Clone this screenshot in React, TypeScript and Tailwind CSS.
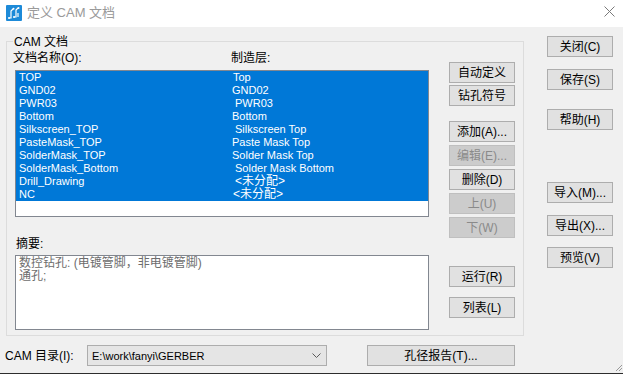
import React from "react";

const FONT = "[font-family:'Liberation_Sans','Noto_Sans_CJK_SC',sans-serif]";

function Btn({ children, disabled = false, className = "" }: { children: React.ReactNode; disabled?: boolean; className?: string }) {
  return (
    <div
      className={
        "h-[21px] flex items-center justify-center text-[12px] leading-[16px] border " +
        (disabled ? "bg-[#cccccc] border-[#bfbfbf] text-[#8a8a8a] " : "bg-[#e1e1e1] border-[#adadad] text-black ") +
        className
      }
    >
      {children}
    </div>
  );
}

const rows: { a: string; b: string; pb: string; cjk?: boolean }[] = [
  { a: "TOP", b: "Top", pb: "pl-[1px]" },
  { a: "GND02", b: "GND02", pb: "pl-0" },
  { a: "PWR03", b: "PWR03", pb: "pl-[3px]" },
  { a: "Bottom", b: "Bottom", pb: "pl-0" },
  { a: "Silkscreen_TOP", b: "Silkscreen Top", pb: "pl-[3px]" },
  { a: "PasteMask_TOP", b: "Paste Mask Top", pb: "pl-0" },
  { a: "SolderMask_TOP", b: "Solder Mask Top", pb: "pl-0" },
  { a: "SolderMask_Bottom", b: "Solder Mask Bottom", pb: "pl-[3px]" },
  { a: "Drill_Drawing", b: "<未分配>", pb: "pl-[3px]", cjk: true },
  { a: "NC", b: "<未分配>", pb: "pl-[1px]", cjk: true },
];

export default function App() {
  return (
    <div className={"w-[623px] h-[374px] bg-[#f0f0f0] flex flex-col overflow-hidden text-black " + FONT}>
      {/* Title bar */}
      <div className="h-[27px] bg-white flex items-center shrink-0">
        <svg width="16" height="16" viewBox="0 0 16 16" className="ml-[6px] mt-[-2px]">
          <rect x="0" y="0" width="16" height="16" rx="1" fill="#1d8ad8" />
          <path d="M3 13 H5 V6 L7 4" stroke="white" strokeWidth="1.2" fill="none" />
          <path d="M8 12 H10 V5 L12 3" stroke="white" strokeWidth="1.2" fill="none" />
          <circle cx="7.5" cy="3.8" r="1" fill="white" />
          <circle cx="12.5" cy="3" r="1" fill="white" />
          <circle cx="3" cy="13" r="1" fill="white" />
          <circle cx="8" cy="12" r="1" fill="white" />
          <path d="M12 8 V12" stroke="white" strokeWidth="1.2" />
        </svg>
        <span className="ml-[5px] text-[13px] leading-[16px] text-[#9a9a9a] mt-[-2px]">定义 CAM 文档</span>
        <svg width="11" height="11" viewBox="0 0 11 11" className="ml-auto mr-[8px] mt-[-4px]">
          <path d="M0.5 0.5 L10.5 10.5 M10.5 0.5 L0.5 10.5" stroke="#7a7a7a" strokeWidth="1" />
        </svg>
      </div>

      {/* Body */}
      <div className="flex flex-1 min-h-0">
        {/* Left part */}
        <div className="w-[524px] pl-[6px] pt-[14px] flex flex-col">
          {/* Group box */}
          <div className="relative w-[518px] h-[295px] border border-[#dcdcdc] pl-[8px] pt-[8px] flex">
            <span className="absolute top-[-8px] left-[6px] bg-[#f0f0f0] px-[1px] text-[12px] leading-[16px]">CAM 文档</span>
            {/* left column */}
            <div className="w-[414px] flex flex-col">
              <div className="h-[16px] flex text-[12px] leading-[16px] ml-[-2px]">
                <span className="w-[218px]">文档名称(O):</span>
                <span>制造层:</span>
              </div>
              <div className="mt-[4px] h-[147px] border border-[#828790] bg-white pt-0">
                <div className="bg-[#0078d7] text-white">
                  {rows.map((r, i) => (
                    <div key={i} className="h-[13px] grid grid-cols-[213px_1fr] pl-[3px] leading-[13px] whitespace-pre">
                      <span className="text-[11px]">{r.a}</span>
                      <span className={(r.cjk ? "text-[12px] " : "text-[11px] ") + r.pb}>{r.b}</span>
                    </div>
                  ))}
                </div>
              </div>
              <div className="mt-[19px] h-[16px] text-[12px] leading-[16px] ml-[1px]">摘要:</div>
              <div className="mt-[3px] h-[75px] border border-[#828790] bg-white pl-[3px] pt-[1px] text-[12px] leading-[13px] text-[#6d6d6d]">
                <div>数控钻孔: (电镀管脚，非电镀管脚)</div>
                <div>通孔;</div>
              </div>
            </div>
            {/* middle buttons */}
            <div className="ml-[20px] w-[66px] pt-[12px] flex flex-col">
              <Btn>自动定义</Btn>
              <Btn className="mt-[2px]">钻孔符号</Btn>
              <Btn className="mt-[15px]">添加(A)...</Btn>
              <Btn disabled className="mt-[3px]">编辑(E)...</Btn>
              <Btn className="mt-[3px]">删除(D)</Btn>
              <Btn disabled className="mt-[3px]">上(U)</Btn>
              <Btn disabled className="mt-[3px]">下(W)</Btn>
              <Btn className="mt-[28px]">运行(R)</Btn>
              <Btn className="mt-[10px]">列表(L)</Btn>
            </div>
          </div>
          {/* Bottom row */}
          <div className="mt-[9px] h-[21px] flex items-center">
            <span className="ml-[-1px] w-[82px] text-[12px] leading-[16px]">CAM 目录(I):</span>
            <div className="w-[240px] h-[21px] bg-[#e5e5e5] border border-[#adadad] flex items-center pl-[4px] pr-[5px]">
              <span className="text-[11px] leading-[16px]">E:\work\fanyi\GERBER</span>
              <svg width="9" height="5" viewBox="0 0 9 5" className="ml-auto">
                <path d="M0.5 0.5 L4.5 4.5 L8.5 0.5" stroke="#5a5a5a" strokeWidth="1" fill="none" />
              </svg>
            </div>
            <Btn className="ml-[40px] w-[148px]">孔径报告(T)...</Btn>
          </div>
        </div>

        {/* Right column */}
        <div className="ml-[23px] w-[66px] pt-[9px] flex flex-col">
          <Btn>关闭(C)</Btn>
          <Btn className="mt-[12px]">保存(S)</Btn>
          <Btn className="mt-[19px]">帮助(H)</Btn>
          <Btn className="mt-[52px]">导入(M)...</Btn>
          <Btn className="mt-[12px]">导出(X)...</Btn>
          <Btn className="mt-[11px]">预览(V)</Btn>
          <div className="mt-auto mb-[1px] self-end mr-[-10px]">
            <svg width="8" height="8" viewBox="0 0 8 8">
              <path d="M7 1 L1 7 M7 4 L4 7" stroke="#9a9a9a" strokeWidth="1" />
            </svg>
          </div>
        </div>
      </div>
      <div className="h-[1px] bg-[#2d2d2d] shrink-0" />
    </div>
  );
}
